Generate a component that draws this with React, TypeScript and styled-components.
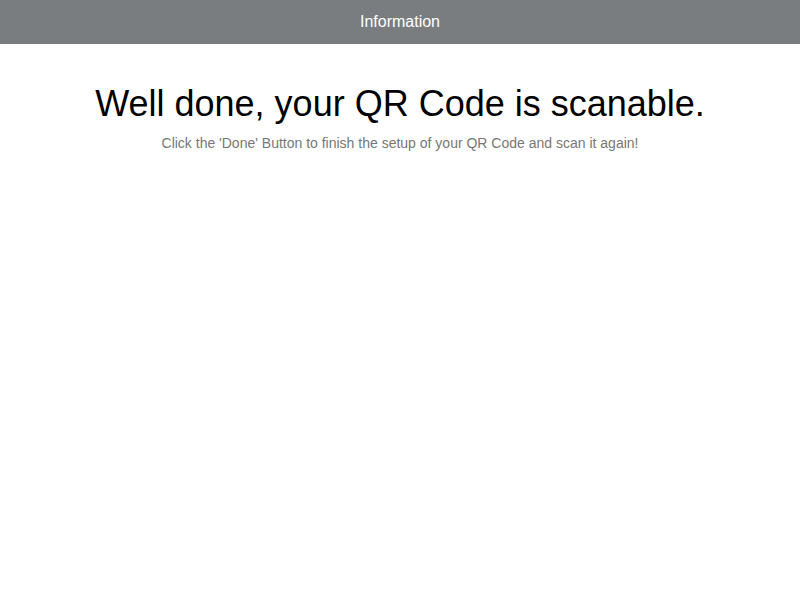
import React from "react";
import styled, { createGlobalStyle } from "styled-components";

const Global = createGlobalStyle`
  html, body { margin: 0; padding: 0; background: #fff; }
  body { font-family: "Liberation Sans", Arial, sans-serif; }
`;

const Header = styled.header`
  height: 44px;
  background: #7a7d80;
  display: flex;
  align-items: center;
  justify-content: center;
`;

const HeaderTitle = styled.h1`
  margin: 0;
  color: #fff;
  font-size: 16px;
  font-weight: 400;
`;

const Content = styled.main`
  display: flex;
  flex-direction: column;
  align-items: center;
  padding-top: 39px;
`;

const Heading = styled.h2`
  margin: 0;
  font-size: 36px;
  font-weight: 400;
  color: #000;
  line-height: 42px;
`;

const Sub = styled.p`
  margin: 10px 0 0;
  font-size: 14px;
  color: #777;
  line-height: 16px;
`;

export default function App() {
  return (
    <>
      <Global />
      <Header>
        <HeaderTitle>Information</HeaderTitle>
      </Header>
      <Content>
        <Heading>Well done, your QR Code is scanable.</Heading>
        <Sub>Click the 'Done' Button to finish the setup of your QR Code and scan it again!</Sub>
      </Content>
    </>
  );
}
